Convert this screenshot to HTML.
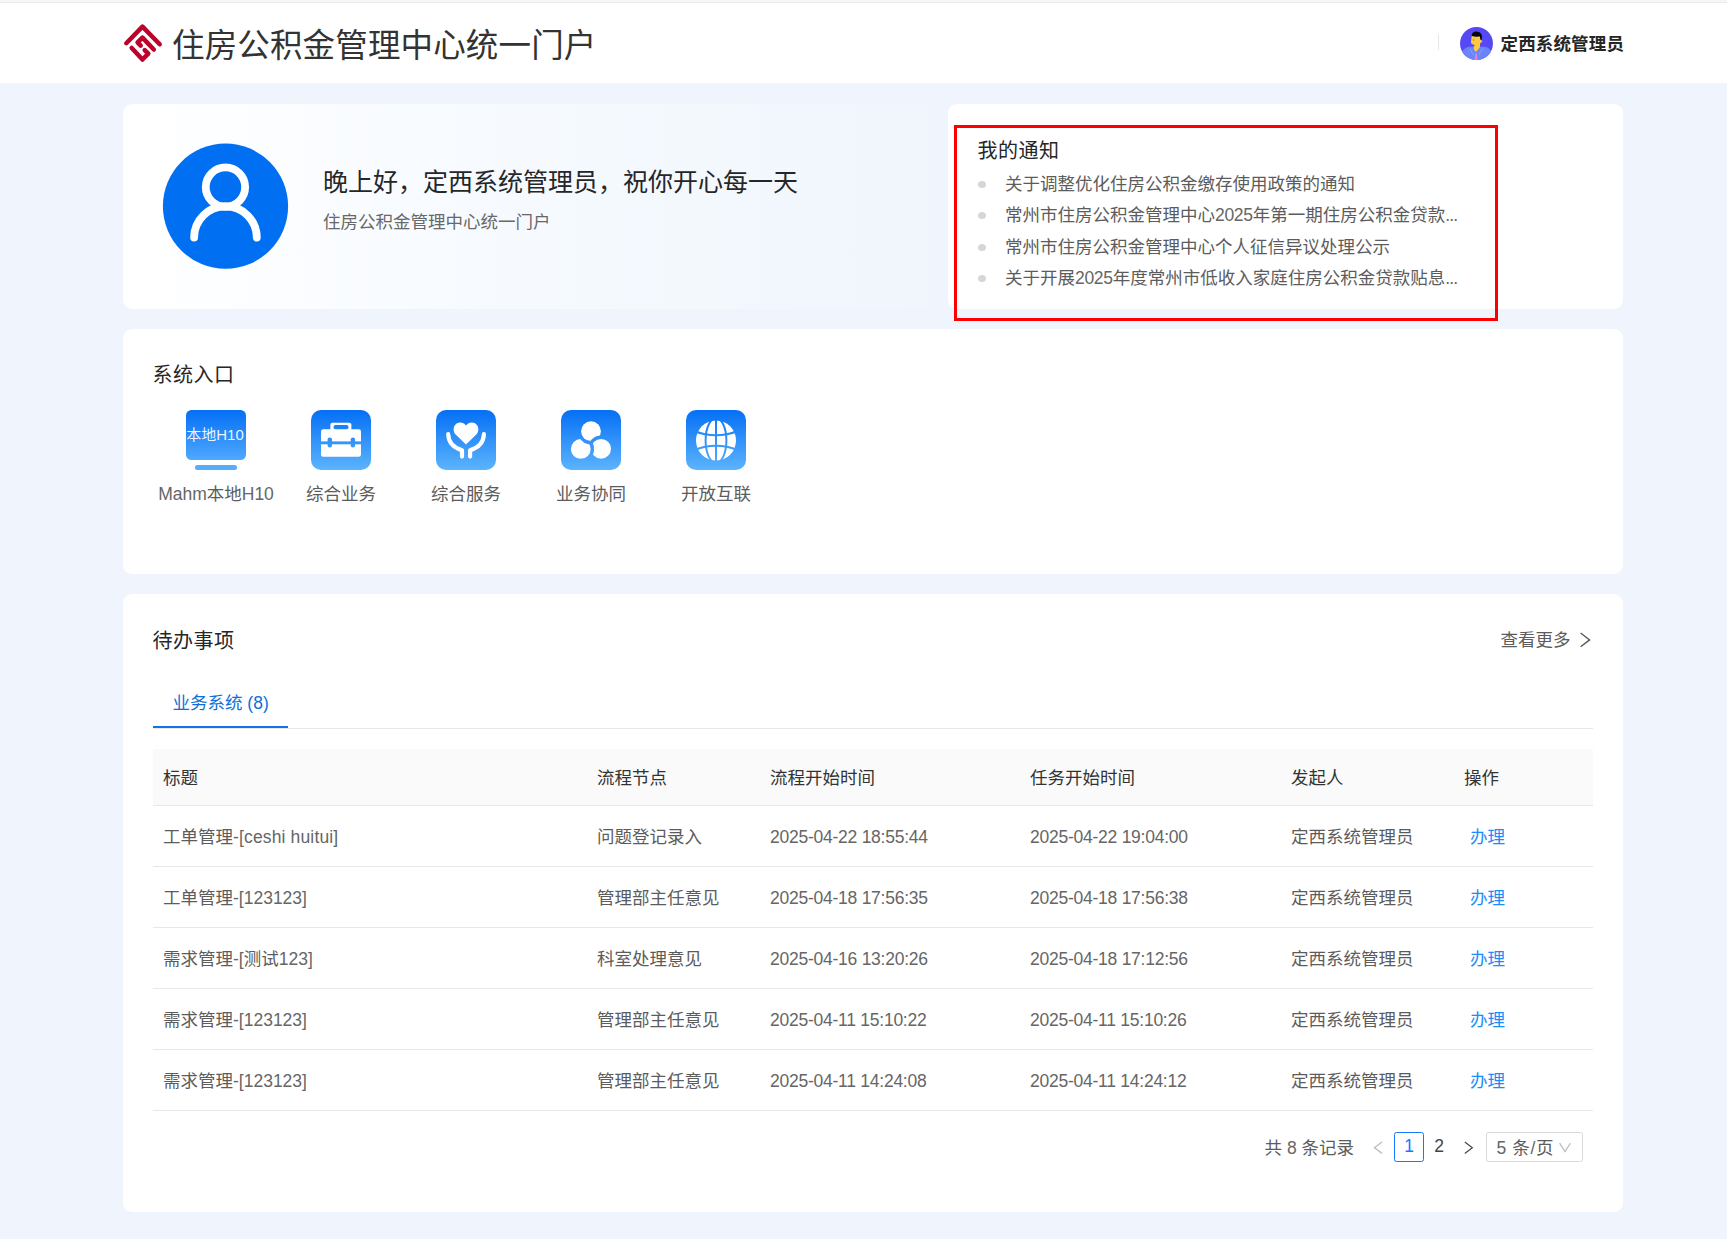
<!DOCTYPE html>
<html lang="zh-CN">
<head>
<meta charset="utf-8">
<title>住房公积金管理中心统一门户</title>
<style>
*{box-sizing:border-box;margin:0;padding:0}
html,body{width:1727px;height:1239px;overflow:hidden}
body{position:relative;background:#f0f4fc;font-family:"Liberation Sans","Noto Sans CJK SC",sans-serif;color:#333;font-size:17.5px}
.abs{position:absolute}
.t{position:absolute;white-space:nowrap;line-height:1}
/* header */
#hdr{position:absolute;left:0;top:0;width:1727px;height:83px;background:#fff;border-top:3px solid #f6f6f6}
#hdr .strip{position:absolute;left:0;top:-1px;width:100%;height:1px;background:#ebebeb}
#title{left:172px;top:29px;font-size:32.5px;color:#333;line-height:34px;letter-spacing:0.15px}
#divider{left:1438px;top:34px;width:1px;height:16px;background:#e6e6e6}
#uname{left:1500.5px;top:34px;font-size:17.5px;font-weight:bold;color:#262626;line-height:20px;letter-spacing:0.15px}
/* cards */
.card{position:absolute;background:#fff;border-radius:9px}
#c1{left:123px;top:103.75px;width:805.5px;height:205px;background:linear-gradient(90deg,#ffffff 0%,#fdfeff 12%,#f8fbff 35%,#f4f9fe 60%,#f1f6fd 100%)}
#c1n{left:948px;top:103.75px;width:675px;height:205px}
#c2{left:123px;top:328.75px;width:1500px;height:245px}
#c3{left:123px;top:593.75px;width:1500px;height:617.75px}
#redbox{left:954px;top:125px;width:544px;height:196px;border:3px solid #ff0000}
#hello{left:323px;top:167px;font-size:25px;color:#262626;line-height:30px}
#sub{left:323px;top:211px;font-size:17.5px;color:#686868;line-height:22px}
.h2{font-size:20px;color:#262626;line-height:24px;letter-spacing:0.5px}
.ni{left:1005px;font-size:17.5px;color:#5c5c5c;line-height:24px}
.dot{position:absolute;left:978px;width:8px;height:7px;border-radius:50%;background:#d6d6d6}
/* entries */
.ico{position:absolute;top:409.75px;width:60px;height:60px;border-radius:10px;background:linear-gradient(180deg,#056ff5 0%,#5cb4fd 100%);overflow:hidden}
.lbl{font-size:17.5px;color:#5c5c5c;line-height:24px;top:481.5px;text-align:center;width:160px}
/* table */
.th{font-size:17.5px;color:#333;font-weight:400;line-height:24px;top:765.5px}
.td{font-size:17.5px;color:#5c5c5c;line-height:24px}
.hl{position:absolute;left:153px;width:1440px;height:1px;background:#e8e8e8}
.lnk{color:#1a8df8}
.dg{letter-spacing:-0.3px;color:#666}
.num{letter-spacing:-0.25px;color:#666}
.la{color:#666}
.el{letter-spacing:-0.8px;color:#666}
</style>
</head>
<body>
<!-- HEADER -->
<div id="hdr"><div class="strip"></div></div>
<svg class="abs" style="left:120px;top:20px" width="46" height="46" viewBox="120 20 46 46" fill="none" stroke="#bb032b" stroke-width="4.5" stroke-linecap="round" stroke-linejoin="round">
<path d="M126.3 43.2 L142.46 26.6 L159.7 44.3"/>
<path d="M140.7 45.6 L137.6 42.4 L142.46 37.6 L153.8 49.5"/>
<path d="M131.7 48 L142.46 59.5 L148.3 53.7 L144.7 50.1"/>
</svg>
<div id="title" class="t">住房公积金管理中心统一门户</div>
<div id="divider" class="abs"></div>
<svg class="abs" style="left:1460px;top:26.85px" width="33" height="33" viewBox="0 0 33 33">
<defs><clipPath id="avc"><circle cx="16.5" cy="16.5" r="16.45"/></clipPath></defs>
<g clip-path="url(#avc)">
<rect width="33" height="33" fill="#5748f5"/>
<path d="M0 33 L0 27 C3 22.5 6 20 10 19.8 L24 19.8 C28 20 31 22.5 33 27 L33 33 Z" fill="#6a85fb"/>
<path d="M11.7 9 C11.5 11 11.2 12.5 11 14.2 C10.9 15.6 11.3 16.8 12.2 17.3 L13.8 17.6 L13.9 22.5 L15.9 24.9 L19.8 20.5 L20.2 15.9 C21.4 15.8 22.4 15 22.3 14 C22.2 13.2 21.6 13 21 13.2 L20.5 9 Z" fill="#fcc845"/>
<path d="M11.6 8.7 C11.6 5.8 14 4.3 16.6 4.4 C19.6 4.5 21.9 6.5 22 9.5 C22 10.8 21.8 12 21.5 12.9 L20.6 13 L19.8 9.6 C17 9.9 13.6 9.6 11.6 8.7 Z" fill="#07070f"/>
<path d="M13.6 18 L14.9 18.4 L14.2 18.9 Z" fill="#2a1a10"/>
<path d="M13.7 12.3 L13.9 13.8" stroke="#6b5220" stroke-width="0.6" fill="none"/>
<path d="M15.4 26.5 L17 26.3 L17.4 33 L14.6 33 Z" fill="#ea7fcf"/>
<path d="M10.2 22 L13.5 28.4 M22.5 21.8 L18.5 28.4" stroke="#8d9ffc" stroke-width="0.8" fill="none"/>
</g>
</svg>
<div id="uname" class="t">定西系统管理员</div>

<!-- WELCOME CARD -->
<div id="c1" class="card"></div>
<svg class="abs" style="left:162px;top:143px" width="128" height="128" viewBox="162 143 128 128">
<circle cx="225.5" cy="206.2" r="62.6" fill="#006ff2"/>
<circle cx="225.45" cy="187.1" r="19.7" fill="none" stroke="#fff" stroke-width="7.8"/>
<path d="M194.1 237.6 A31.35 31.35 0 0 1 256.8 237.6" fill="none" stroke="#fff" stroke-width="7.8" stroke-linecap="round"/>
</svg>
<div id="hello" class="t">晚上好，定西系统管理员，祝你开心每一天</div>
<div id="sub" class="t">住房公积金管理中心统一门户</div>

<!-- NOTICE CARD -->
<div id="c1n" class="card"></div>
<div class="t h2" style="left:977.5px;top:139px">我的通知</div>
<div class="dot" style="top:181px"></div>
<div class="dot" style="top:212.25px"></div>
<div class="dot" style="top:243.5px"></div>
<div class="dot" style="top:274.75px"></div>
<div class="t ni" style="top:172px">关于调整优化住房公积金缴存使用政策的通知</div>
<div class="t ni" style="top:203.25px">常州市住房公积金管理中心<span class="dg">2025</span>年第一期住房公积金贷款<span class="el">...</span></div>
<div class="t ni" style="top:234.5px">常州市住房公积金管理中心个人征信异议处理公示</div>
<div class="t ni" style="top:265.75px">关于开展<span class="dg">2025</span>年度常州市低收入家庭住房公积金贷款贴息<span class="el">...</span></div>
<div id="redbox" class="abs"></div>

<!-- SYSTEM ENTRIES -->
<div id="c2" class="card"></div>
<div class="t h2" style="left:152.5px;top:363.25px">系统入口</div>
<!--ICONS-START-->
<!-- icon 1: monitor -->
<div class="abs" style="left:186px;top:409.75px;width:60px;height:50px;border-radius:5.5px;background:linear-gradient(180deg,#056ff5 0%,#50a8fe 100%);overflow:hidden">
<div class="t" style="left:-6px;top:17px;width:70px;text-align:center;font-size:15px;line-height:16px;color:rgba(255,255,255,.92)">本地H10</div>
</div>
<div class="abs" style="left:194.75px;top:464.75px;width:42.5px;height:5px;border-radius:2.5px;background:#56adfe"></div>
<!-- icon 2: briefcase -->
<div class="ico" style="left:311px">
<svg width="60" height="60" viewBox="0 0 60 60">
<defs><mask id="m2"><rect width="60" height="60" fill="#000"/>
<rect x="10" y="19.3" width="40" height="27.5" rx="2.2" fill="#fff"/>
<rect x="19.4" y="12.7" width="21" height="9" rx="2" fill="#fff"/>
<rect x="22.5" y="15" width="15" height="4.3" rx="2.1" fill="#000"/>
<rect x="0" y="31.4" width="60" height="2.9" fill="#000"/>
<rect x="16.6" y="27.4" width="4.4" height="10" rx="2.2" fill="#000"/>
<rect x="39.7" y="27.4" width="4.4" height="10" rx="2.2" fill="#000"/>
</mask></defs>
<rect width="60" height="60" fill="#fff" mask="url(#m2)"/>
</svg></div>
<!-- icon 3: heart + hands -->
<div class="ico" style="left:436px">
<svg width="60" height="60" viewBox="0 0 60 60">
<path d="M30 34.4 L19.4 24.2 C16.6 21.2 17.2 15.4 21 13.3 C24.2 11.6 27.8 12.6 30 15.4 C32.2 12.6 35.8 11.6 39 13.3 C42.8 15.4 43.4 21.2 40.6 24.2 Z" fill="#fff"/>
<path d="M12.2 24.2 C12.4 32 17.5 37.6 26 40.2 L26 46.6 M47.9 24.2 C47.7 32 42.6 37.6 34.1 40.2 L34.1 46.6" fill="none" stroke="#fff" stroke-width="4.2" stroke-linecap="round" stroke-linejoin="round"/>
</svg></div>
<!-- icon 4: three circles -->
<div class="ico" style="left:561px">
<svg width="60" height="60" viewBox="0 0 60 60">
<defs>
<mask id="m4a"><rect width="60" height="60" fill="#fff"/><circle cx="40.1" cy="38.8" r="13.3" fill="#000"/></mask>
<mask id="m4b"><rect width="60" height="60" fill="#fff"/><circle cx="30" cy="21.2" r="13.3" fill="#000"/></mask>
<mask id="m4c"><rect width="60" height="60" fill="#fff"/><circle cx="19.8" cy="38.9" r="13.3" fill="#000"/></mask>
</defs>
<circle cx="30" cy="21.2" r="9.9" fill="#fff" mask="url(#m4a)"/>
<circle cx="19.8" cy="38.9" r="9.9" fill="#fff" mask="url(#m4b)"/>
<circle cx="40.1" cy="38.8" r="9.9" fill="#fff" mask="url(#m4c)"/>
</svg></div>
<!-- icon 5: globe -->
<div class="ico" style="left:686px">
<svg width="60" height="60" viewBox="0 0 60 60">
<defs><mask id="m5"><rect width="60" height="60" fill="#000"/>
<circle cx="30" cy="30.5" r="20" fill="#fff"/>
<g fill="none" stroke="#000" stroke-width="2">
<path d="M30 8 V53"/>
<ellipse cx="30" cy="30.5" rx="10.4" ry="22.5"/>
<path d="M8 21 Q30 29.6 52 21"/>
<path d="M8 40 Q30 31.4 52 40"/>
</g></mask></defs>
<rect width="60" height="60" fill="#fff" mask="url(#m5)"/>
</svg></div>
<div class="t lbl" style="left:136px"><span class="la">Mahm</span>本地<span class="la">H10</span></div>
<div class="t lbl" style="left:261px">综合业务</div>
<div class="t lbl" style="left:386px">综合服务</div>
<div class="t lbl" style="left:511px">业务协同</div>
<div class="t lbl" style="left:636px">开放互联</div>
<!--ICONS-END-->

<!-- TODO CARD -->
<div id="c3" class="card"></div>
<div class="t h2" style="left:152.5px;top:628.5px">待办事项</div>
<!--TODO-START-->
<div class="t" style="left:1500.5px;top:627.5px;font-size:17.5px;color:#5c5c5c;line-height:24px">查看更多</div>
<svg class="abs" style="left:1576px;top:630px" width="18" height="20" viewBox="1576 630 18 20"><path d="M1580.6 633 L1589.6 639.9 L1580.6 646.8" fill="none" stroke="#595959" stroke-width="1.4"/></svg>
<div class="t" style="left:172.5px;top:690.7px;font-size:17.5px;color:#0f6fd8;line-height:24px">业务系统 (8)</div>
<div class="hl" style="top:727.75px"></div>
<div class="abs" style="left:153px;top:726px;width:135px;height:2.3px;background:#1273e6"></div>
<div class="abs" style="left:153px;top:749.25px;width:1440px;height:56.75px;background:#fafafa;border-bottom:1px solid #e8e8e8"></div>
<div class="t th" style="left:163px">标题</div>
<div class="t th" style="left:597px">流程节点</div>
<div class="t th" style="left:770px">流程开始时间</div>
<div class="t th" style="left:1030px">任务开始时间</div>
<div class="t th" style="left:1291px">发起人</div>
<div class="t th" style="left:1464px">操作</div>
<div class="t td" style="left:163px;top:825.0px">工单管理<span class="la" style="letter-spacing:0.15px">-[ceshi huitui]</span></div>
<div class="t td" style="left:597px;top:825.0px">问题登记录入</div>
<div class="t td num" style="left:770px;top:825.0px">2025-04-22 18:55:44</div>
<div class="t td num" style="left:1030px;top:825.0px">2025-04-22 19:04:00</div>
<div class="t td" style="left:1291px;top:825.0px">定西系统管理员</div>
<div class="t td lnk" style="left:1470px;top:825.0px">办理</div>
<div class="hl" style="top:866px"></div>
<div class="t td" style="left:163px;top:886.0px">工单管理<span class="la">-[123123]</span></div>
<div class="t td" style="left:597px;top:886.0px">管理部主任意见</div>
<div class="t td num" style="left:770px;top:886.0px">2025-04-18 17:56:35</div>
<div class="t td num" style="left:1030px;top:886.0px">2025-04-18 17:56:38</div>
<div class="t td" style="left:1291px;top:886.0px">定西系统管理员</div>
<div class="t td lnk" style="left:1470px;top:886.0px">办理</div>
<div class="hl" style="top:927px"></div>
<div class="t td" style="left:163px;top:947.0px">需求管理<span class="la">-[</span>测试<span class="la">123]</span></div>
<div class="t td" style="left:597px;top:947.0px">科室处理意见</div>
<div class="t td num" style="left:770px;top:947.0px">2025-04-16 13:20:26</div>
<div class="t td num" style="left:1030px;top:947.0px">2025-04-18 17:12:56</div>
<div class="t td" style="left:1291px;top:947.0px">定西系统管理员</div>
<div class="t td lnk" style="left:1470px;top:947.0px">办理</div>
<div class="hl" style="top:988px"></div>
<div class="t td" style="left:163px;top:1008.0px">需求管理<span class="la">-[123123]</span></div>
<div class="t td" style="left:597px;top:1008.0px">管理部主任意见</div>
<div class="t td num" style="left:770px;top:1008.0px">2025-04-11 15:10:22</div>
<div class="t td num" style="left:1030px;top:1008.0px">2025-04-11 15:10:26</div>
<div class="t td" style="left:1291px;top:1008.0px">定西系统管理员</div>
<div class="t td lnk" style="left:1470px;top:1008.0px">办理</div>
<div class="hl" style="top:1049px"></div>
<div class="t td" style="left:163px;top:1069.0px">需求管理<span class="la">-[123123]</span></div>
<div class="t td" style="left:597px;top:1069.0px">管理部主任意见</div>
<div class="t td num" style="left:770px;top:1069.0px">2025-04-11 14:24:08</div>
<div class="t td num" style="left:1030px;top:1069.0px">2025-04-11 14:24:12</div>
<div class="t td" style="left:1291px;top:1069.0px">定西系统管理员</div>
<div class="t td lnk" style="left:1470px;top:1069.0px">办理</div>
<div class="hl" style="top:1110px"></div>
<div class="t td" style="left:1264.5px;top:1135.5px">共 <span class="la">8</span> 条记录</div>
<svg class="abs" style="left:1370px;top:1138px" width="16" height="20" viewBox="1370 1138 16 20"><path d="M1382 1142 L1374.5 1147.7 L1382 1153.4" fill="none" stroke="#bfbfbf" stroke-width="1.4"/></svg>
<div class="abs" style="left:1394px;top:1132px;width:30px;height:30px;border:1.25px solid #1677ff;border-radius:2.5px;background:#fff"></div>
<div class="t" style="left:1394px;top:1134px;width:30px;text-align:center;font-size:17.5px;line-height:24px;color:#1677ff">1</div>
<div class="t" style="left:1424px;top:1134px;width:30px;text-align:center;font-size:17.5px;line-height:24px;color:#444">2</div>
<svg class="abs" style="left:1460px;top:1138px" width="16" height="20" viewBox="1460 1138 16 20"><path d="M1464.8 1142 L1472.3 1147.7 L1464.8 1153.4" fill="none" stroke="#4a4a4a" stroke-width="1.25"/></svg>
<div class="abs" style="left:1486px;top:1132px;width:97px;height:30px;border:1px solid #d9d9d9;border-radius:2.5px;background:#fff"></div>
<div class="t td" style="left:1496.5px;top:1135.5px;letter-spacing:0.6px"><span class="la">5</span> 条<span class="la">/</span>页</div>
<svg class="abs" style="left:1556px;top:1139px" width="18" height="16" viewBox="1556 1139 18 16"><path d="M1559.6 1143.2 L1565 1151.6 L1570.4 1143.2" fill="none" stroke="#bfbfbf" stroke-width="1.3"/></svg>
<!--TODO-END-->
</body>
</html>
